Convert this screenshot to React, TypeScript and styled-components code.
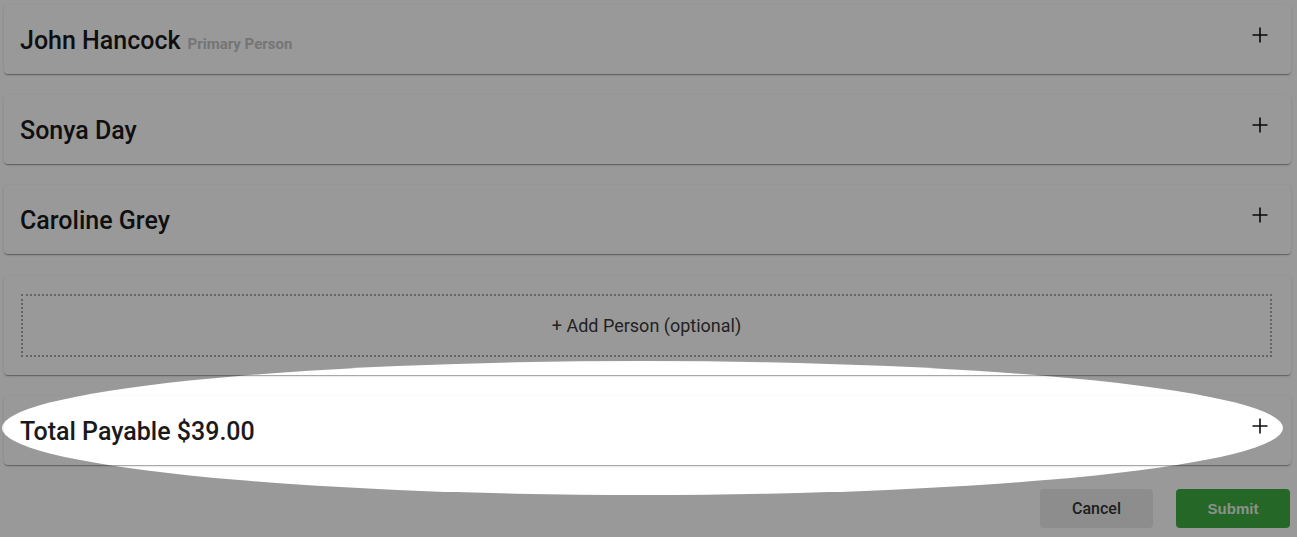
import React from "react";
import styled, { createGlobalStyle } from "styled-components";

const GlobalStyle = createGlobalStyle`
    html, body {
        margin: 0;
        padding: 0;
        background: #ffffff;
        overflow: hidden;
    }
    body {
        font-family: Roboto, "Liberation Sans", Arial, sans-serif;
        color: rgba(0, 0, 0, 0.87);
    }
`;

type IPerson = {
    name: string;
    tag?: string;
};

const people: IPerson[] = [
    { name: "John Hancock", tag: "Primary Person" },
    { name: "Sonya Day" },
    { name: "Caroline Grey" },
];

const PlusIcon = () => (
    <svg width="16" height="16" viewBox="0 0 16 16" fill="none">
        <path d="M8 0.5V15.5M0.5 8H15.5" stroke="#111" strokeWidth="1.6" />
    </svg>
);

const Panel = ({ title, tag }: { title: string; tag?: string }) => (
    <Card>
        <Header>
            <Title>
                {title}
                {tag && <Tag>{tag}</Tag>}
            </Title>
            <Toggle>
                <PlusIcon />
            </Toggle>
        </Header>
    </Card>
);

const App = () => {
    return (
        <Page>
            <GlobalStyle />
            <List>
                {people.map((p) => (
                    <Panel key={p.name} title={p.name} tag={p.tag} />
                ))}
                <AddCard>
                    <AddBox>+ Add Person (optional)</AddBox>
                </AddCard>
                <Panel title="Total Payable $39.00" />
            </List>
            <Actions>
                <CancelButton>Cancel</CancelButton>
                <SubmitButton>Submit</SubmitButton>
            </Actions>
            <Spotlight />
        </Page>
    );
};

const Page = styled.div`
    position: relative;
    width: 1297px;
    height: 537px;
    box-sizing: border-box;
    padding: 5px 6px 0 4px;
    overflow: hidden;
`;

const List = styled.div`
    display: flex;
    flex-direction: column;
    gap: 21px;
`;

const Card = styled.div`
    background: #ffffff;
    border-radius: 4px;
    box-shadow: 0 2px 1px -1px rgba(0, 0, 0, 0.2), 0 1px 1px 0 rgba(0, 0, 0, 0.14),
        0 1px 3px 0 rgba(0, 0, 0, 0.12);
`;

const Header = styled.div`
    height: 69px;
    display: flex;
    align-items: center;
    justify-content: space-between;
    padding: 0 23px 0 16px;
`;

const Title = styled.div`
    font-size: 25px;
    font-weight: 500;
    color: #1a1a1a;
    display: flex;
    align-items: baseline;
    gap: 7px;
    margin-top: 1px;
`;

const Tag = styled.span`
    font-size: 15px;
    font-weight: 700;
    color: #c4c4c4;
`;

const Toggle = styled.div`
    display: flex;
    margin-top: -9px;
`;

const AddCard = styled(Card)`
    margin-top: 1px;
    padding: 18px 19px 18px 17px;
`;

const AddBox = styled.div`
    height: 63px;
    box-sizing: border-box;
    border: 2px dotted #a8a8a8;
    display: flex;
    align-items: center;
    justify-content: center;
    font-size: 18px;
    color: #3a3a3a;
`;

const Actions = styled.div`
    display: flex;
    justify-content: flex-end;
    gap: 23px;
    margin-top: 24px;
    padding-right: 1px;
`;

const Button = styled.button`
    height: 39px;
    border: none;
    border-radius: 4px;
    font-size: 15px;
    cursor: pointer;
`;

const CancelButton = styled(Button)`
    width: 113px;
    background: #ececec;
    color: #333333;
    font-family: Roboto, sans-serif;
    font-weight: 500;
    font-size: 16px;
`;

const SubmitButton = styled(Button)`
    width: 114px;
    background: #33a837;
    color: #e6f2e6;
    font-family: "Liberation Sans", Arial, sans-serif;
    font-weight: 700;
    opacity: 0.95;
`;

const Spotlight = styled.div`
    position: absolute;
    left: 2px;
    top: 361px;
    width: 1281px;
    height: 134px;
    border-radius: 50%;
    box-shadow: 0 0 0 3000px rgba(0, 0, 0, 0.4);
    pointer-events: none;
`;

export default App;
